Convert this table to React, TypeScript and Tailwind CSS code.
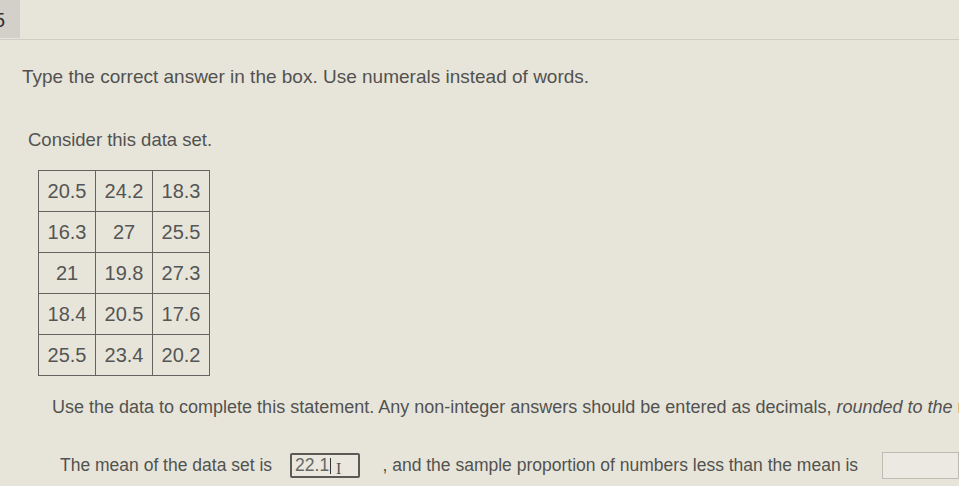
import React from "react";

const rows = [
  ["20.5", "24.2", "18.3"],
  ["16.3", "27", "25.5"],
  ["21", "19.8", "27.3"],
  ["18.4", "20.5", "17.6"],
  ["25.5", "23.4", "20.2"],
];

export default function App() {
  return (
    <div
      className="relative w-[959px] h-[486px] overflow-hidden bg-[#e7e5da] text-[#525250]"
      style={{ fontFamily: '"Liberation Sans", Arial, sans-serif' }}
    >
      {/* question number tab */}
      <div className="flex h-[40px] border-b border-[#cfcdc4]">
        <div className="w-[20px] h-[38px] bg-[#d2d0c9] flex items-start">
          <span className="text-[20px] leading-none text-[#333] -ml-[6px] mt-[10px]">5</span>
        </div>
      </div>

      <div className="pl-[22px] pt-[26px] text-[19px] leading-[22px] whitespace-nowrap">
        Type the correct answer in the box. Use numerals instead of words.
      </div>

      <div className="pl-[28px] pt-[41px] text-[18.5px] leading-[22px] whitespace-nowrap">
        Consider this data set.
      </div>

      <div className="pl-[38px] pt-[19px]">
        <table className="border-collapse text-[20px] text-[#555]">
          <tbody>
            {rows.map((r, i) => (
              <tr key={i}>
                {r.map((v, j) => (
                  <td
                    key={j}
                    className="border border-[#63635f] w-[57px] h-[41px] text-center align-middle px-[2px]"
                  >
                    {v}
                  </td>
                ))}
              </tr>
            ))}
          </tbody>
        </table>
      </div>

      <div className="pl-[52px] pt-[20px] text-[18px] leading-[22px] whitespace-nowrap">
        Use the data to complete this statement. Any non-integer answers should be entered as decimals,{" "}
        <span className="italic">rounded to the</span> nearest tenth.
      </div>

      <div className="flex items-center pl-[60px] pt-[34px] text-[17.5px] whitespace-nowrap">
        <span>The mean of the data set is</span>
        <div className="relative ml-[18px] w-[73px] h-[25px] border-2 border-[#5a5a56] rounded-[2px] bg-[#e9e7de] flex items-center pl-[3px] text-[#666]">
          22.1<span className="ml-[1px] w-[1px] h-[16px] bg-[#333]" />
          <span className="absolute left-[44px] top-[2px] text-[#555] text-[16px] font-['Liberation_Serif']">I</span>
        </div>
        <span className="ml-[22px]">, and the sample proportion of numbers less than the mean is</span>
        <div className="ml-[24px] w-[80px] h-[27px] border border-[#bdbbb2] bg-[#ebe9e1]" />
      </div>
    </div>
  );
}
